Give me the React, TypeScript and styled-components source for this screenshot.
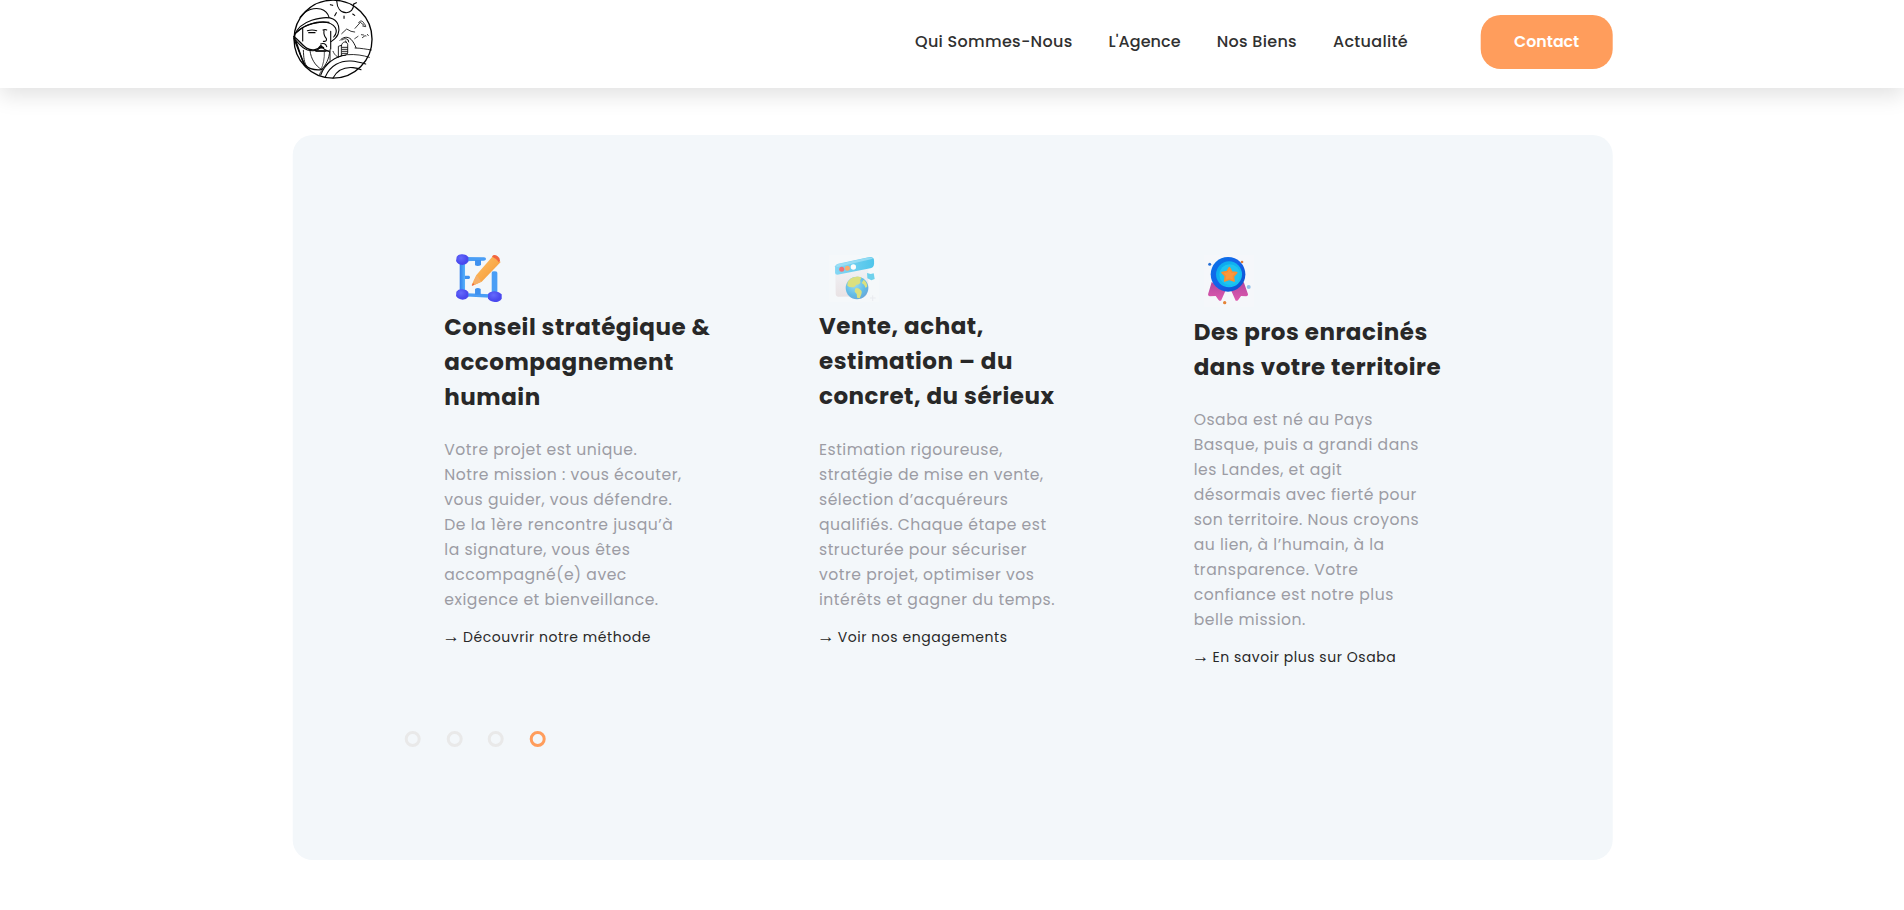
import React from 'react';
import styled, { createGlobalStyle } from 'styled-components';

const GlobalStyle = createGlobalStyle`
  *, *::before, *::after { box-sizing: border-box; }
  body {
    margin: 0;
    background: #fff;
    color: #282828;
    font-family: Poppins, Inter, sans-serif;
  }
`;

const Page = styled.div`
  min-height: 910px;
  overflow: hidden;
`;

const Header = styled.header`
  position: relative;
  height: 88px;
  background: #fff;
  box-shadow: 0 8px 20px rgba(0, 0, 0, 0.115);
`;

const Container = styled.div`
  width: 1320px;
  margin: 0 auto;
  translate: 0.7px;
`;

const HeaderRow = styled(Container)`
  display: flex;
  align-items: flex-start;
  justify-content: space-between;
`;

const LogoSvg = styled.svg`
  width: 80px;
  height: 80px;
  overflow: visible;
`;

const Nav = styled.nav`
  display: flex;
  align-items: center;
  gap: 36px;
  padding-top: 15px;
`;

const NavLink = styled.a<{ $tight?: boolean }>`
  font-size: 16px;
  font-weight: 500;
  line-height: 24px;
  letter-spacing: ${(p) => (p.$tight ? 0.08 : 0.3)}px;
  white-space: nowrap;
  color: #303030;
  text-decoration: none;
`;

const ContactButton = styled.a`
  width: 132px;
  height: 54px;
  margin-left: 36.8px;
  border-radius: 20px;
  background: #ff9d5c;
  color: #fff;
  font-size: 15.8px;
  font-weight: 600;
  line-height: 53px;
  text-align: center;
`;

const Card = styled.section`
  height: 725px;
  margin-top: 47px;
  padding: 115px 0 0 112px;
  border-radius: 20px;
  background: #f3f7fa;
`;

const Features = styled.div`
  display: grid;
  grid-template-columns: repeat(3, 374.7px);
  height: 481px;
  padding-left: 39.6px;
`;

const Feature = styled.article`
  display: flex;
  flex-direction: column;
  align-items: flex-start;
`;

const FeatureIcon = styled.svg`
  display: block;
  width: 76px;
`;

const Title = styled.h3<{ $gap: number }>`
  margin: 0 0 ${(p) => p.$gap}px;
  font-size: 23px;
  font-weight: 700;
  line-height: 35px;
  letter-spacing: 0.52px;
  color: #282828;
`;

const Description = styled.p`
  margin: 0 0 13px;
  font-size: 15.6px;
  line-height: 25px;
  letter-spacing: 0.52px;
  color: #9c9ca4;
`;

const Line = styled.span`
  display: block;
  white-space: nowrap;
`;

const MoreLink = styled.a`
  display: flex;
  align-items: baseline;
  height: 25px;
  font-size: 14px;
  line-height: 25px;
  letter-spacing: 0.54px;
  color: #282828;
`;

const Arrow = styled.span`
  width: 18.8px;
  font-family: 'Liberation Sans', sans-serif;
  font-size: 17.5px;
  line-height: 20px;
  letter-spacing: 0;
  text-indent: -2px;
`;

const Dots = styled.div`
  display: flex;
  gap: 25.67px;
`;

const Dot = styled.span<{ $active?: boolean }>`
  width: 16px;
  height: 16px;
  border: 3px solid ${(p) => (p.$active ? '#ff9d5c' : '#e9e9e9')};
  border-radius: 50%;
`;

function Logo() {
  return (
    <LogoSvg viewBox="39 0 240 240" fill="none" stroke="#050505" strokeWidth="3.3" strokeLinecap="round" strokeLinejoin="round">
      <circle cx="160" cy="117.5" r="117" strokeWidth="4" />
      {/* sun */}
      <path d="M171 2c1 22 12 35 27 36s24-11 24-25" />
      <path d="M170 38l-5 9M193 48v7M219 42l6 4M152 14l7 2M222 12l8-4" />
      {/* helmet */}
      <path d="M61 52c18-24 44-30 62-25 13 4 22 14 25 25" />
      <path d="M44 107c8-24 28-38 52-46 22-7 48-12 64-4 18 9 21 32 15 46-5 12-15 18-21 22" />
      <path d="M46 102c22-24 50-33 73-35 25-2 41 4 48 16 5 9 2 20-5 28" />
      <path d="M48 98c22-20 58-37 100-31" />
      <path d="M42 110c16 10 26 27 40 35 16 9 34 4 42-9" strokeWidth="4" />
      <path d="M42 114c14 15 23 30 41 36 20 5 36-1 43-12 3 7 12 13 21 16" />
      <path d="M48 122c10 24 16 55 28 73 12 12 31 16 49 14" strokeWidth="4" />
      <path d="M44 119l30 76M45 104v24" strokeWidth="3.8" />
      {/* face */}
      <path d="M69 85v38M83 92c10-3 18-3 28 0M87 98h19M130 90c4-2 8-2 11 0M133 91c-2 12 1 18 7 25 2 6-2 9-9 8" />
      <path d="M153 94v53M123 132c8-4 16 0 18 8" />
      <path d="M120 143h11" strokeWidth="5" />
      {/* beard */}
      <path d="M71 151c1 22 2 36 9 46M91 153c3 23 15 44 34 55M108 153h40M150 153c-1 23-12 43-24 55M151 149v33l-24 27" strokeWidth="2.6" />
      <path d="M134 155c1 21-4 39-9 51" strokeWidth="2" />
      <path d="M109 153h29" strokeWidth="4" />
      {/* mountains */}
      <path d="M186 101l15-14 13 7 11 2M226 85l16-18 11 9M237 68c4-8 12-6 15 1 3 5 6 5 6 11l-9-2M248 113l8-6 3 1" strokeWidth="2.4" />
      <path d="M225 116l10-7M245 104l7 1M263 103l3 4" strokeWidth="2.2" />
      {/* gloved hand */}
      <path d="M176 169v-30l9-3v31zM185 137c2-13 16-15 19-4v26c-3 8-13 9-19 6M187 142h16M187 148h16M187 154h16M187 160h15" strokeWidth="2.6" />
      <path d="M181 121c8-10 23-13 33-3 6 6 12 17 15 25M187 120c7-6 15-5 19 1M198 123l2 5M205 120l2 6" strokeWidth="2.8" />
      {/* planet rings */}
      <path d="M226 144c17 0 35 4 49 6M203 164c25-2 47 2 66 8" strokeWidth="2.5" />
      <path d="M123 225c13-34 44-57 76-60" />
      <path d="M137 230c15-34 46-49 77-47 17 1 34 6 44 9" />
      <path d="M160 234c13-24 37-33 60-31 12 1 20 4 24 6" />
      <path d="M129 209c-7 5-8 12-11 18M160 154c5 12 12 16 17 18" strokeWidth="2.4" />
    </LogoSvg>
  );
}

function BlueprintIcon() {
  return (
    <FeatureIcon viewBox="14 30 228 180" height="60">
      <defs>
        <linearGradient id="bar" x1="0" x2="1"><stop stopColor="#2f7fec" /><stop offset="1" stopColor="#58b3fb" /></linearGradient>
        <linearGradient id="pencil" x1="0" y1="0" x2="1" y2="1"><stop stopColor="#ffc467" /><stop offset=".55" stopColor="#f9a949" /><stop offset="1" stopColor="#e58a32" /></linearGradient>
        <radialGradient id="knob" cx=".4" cy=".35"><stop stopColor="#6469fb" /><stop offset="1" stopColor="#4a49ee" /></radialGradient>
      </defs>
      <path d="M59 62h16v98H59z" fill="url(#bar)" />
      <path d="M66 51l66 1q6 1 6 5t-6 5l-65 2zM155 98q0-4 8-4t9 4v64h-17zM66 159l84 4v10l-84-4z" fill="#4a9ef5" />
      <path d="M105 60h18v15q-9 6-18 1zM75 107h12q6 5 0 10H75zM105 147q8-6 17 0v17h-17z" fill="#3e91ef" />
      <path d="M50 50q5-8 17-7 13 1 18 8v14q-5 8-17 10-14 0-20-12z" fill="url(#knob)" />
      <path d="M49 155q6-8 18-7 13 1 18 8v14q-5 8-17 9-14-1-20-11z" fill="url(#knob)" />
      <path d="M144 162q6-8 20-8 14 1 21 9v13q-6 10-21 10-16-1-20-11z" fill="url(#knob)" />
      <path d="M158 49l24 17-57 59-28 12-1-4 13-28z" fill="url(#pencil)" />
      <path d="M101 122l9-17 14 20-21 10z" fill="#f6b069" />
      <path d="M156 50l3-4q6-3 13 2 9 6 8 14l-4 5q-5-10-20-17z" fill="#f2663f" />
      <path d="M99 129l4 5-8 4z" fill="#ed6445" />
    </FeatureIcon>
  );
}

function BrowserGlobeIcon() {
  return (
    <FeatureIcon viewBox="12 30 228 177" height="59">
      <defs>
        <linearGradient id="topbar" x1="0" x2="1"><stop stopColor="#86d7f4" /><stop offset="1" stopColor="#4fc5ea" /></linearGradient>
        <linearGradient id="window" x1="0" x2="0" y1="0" y2="1"><stop stopColor="#f1f2f6" /><stop offset="1" stopColor="#e9e2e4" /></linearGradient>
        <radialGradient id="globe" cx=".4" cy=".35" r=".7"><stop stopColor="#9bdcf2" /><stop offset=".65" stopColor="#62bce6" /><stop offset="1" stopColor="#6ba6d8" /></radialGradient>
      </defs>
      <path d="M43 45h149v141H43z" fill="#f5f8fa" />
      <path d="M62 101l99-17v45l-8 40-82 1q-8-1-8-9z" fill="url(#window)" />
      <path d="M61 79q2-6 9-8l95-20q13-1 13 11v10q-1 11-11 13L68 104q-7 0-7-6z" fill="url(#topbar)" />
      <path d="M64 77q3-4 8-5l92-20q7 0 11 4L66 82z" fill="#a1e0f5" opacity=".8" />
      <circle cx="81" cy="88" r="7.5" fill="#f26f76" />
      <circle cx="98" cy="85" r="7.5" fill="#f8ac70" />
      <circle cx="116" cy="81" r="8" fill="#fdfcfb" />
      <path d="M157 99l11 3 9-2 3 17-10 4-12-6z" fill="#6fd1ec" />
      <circle cx="127" cy="144" r="34" fill="url(#globe)" />
      <path d="M99 126q8-15 27-16 13-1 14 5-6 5-3 13-5 8-13 6-1 7-12 8-9 0-14-5zM147 119q9 6 11 20l-5 5-5-10-7-5zM121 146q8-5 17 4 5 3 2 13l-5 12-8-2-1-11-6-7z" fill="#dbe07f" />
      <path d="M174 166v17M166 174h17" stroke="#e9ebef" strokeWidth="3" />
    </FeatureIcon>
  );
}

function AwardIcon() {
  return (
    <FeatureIcon viewBox="12 30 228 195" height="65">
      <defs>
        <linearGradient id="rim" x1="0" y1="0" x2="1" y2="1"><stop stopColor="#0876e7" /><stop offset=".5" stopColor="#1562ea" /><stop offset="1" stopColor="#0b50c9" /></linearGradient>
        <linearGradient id="disc" x1="0" y1="0" x2="1" y2="1"><stop stopColor="#0aa5ed" /><stop offset="1" stopColor="#17c8f2" /></linearGradient>
        <linearGradient id="ribbon" x1="0" y1="0" x2="0" y2="1"><stop stopColor="#b3479f" /><stop offset="1" stopColor="#df59ae" /></linearGradient>
      </defs>
      <path d="M42 45h150v156H42z" fill="#f5f7fa" />
      <path d="M66 126l42 25-14 31q-4 2-8-3l-8-11-18 1q-6-1-5-6zM162 126l-38 25 14 31q4 2 8-3l8-11 16 1q6-1 5-6z" fill="url(#ribbon)" />
      <circle cx="115" cy="103" r="52" fill="url(#rim)" />
      <circle cx="118" cy="103" r="39" fill="url(#disc)" />
      <circle cx="120" cy="104" r="31" fill="#20c3ef" />
      <path d="M119 83l7 13 15 2-10 11 2 14-14-5-14 5 2-15-10-10 15-3z" fill="#fb983c" stroke="#f98f31" strokeWidth="5" strokeLinejoin="round" />
      <circle cx="60" cy="73" r="4.5" fill="#2771d6" />
      <circle cx="157" cy="66" r="4" fill="#e17d37" />
      <circle cx="177" cy="141" r="6" fill="#91bfe7" />
      <circle cx="105" cy="188" r="5" fill="#e58337" />
    </FeatureIcon>
  );
}

type FeatureData = {
  icon: () => React.JSX.Element;
  titleGap: number;
  title: string[];
  description: string[];
  link: string;
};

const features: FeatureData[] = [
  {
    icon: BlueprintIcon,
    titleGap: 22,
    title: ['Conseil stratégique &', 'accompagnement', 'humain'],
    description: [
      'Votre projet est unique.',
      'Notre mission : vous écouter,',
      'vous guider, vous défendre.',
      'De la 1ère rencontre jusqu’à',
      'la signature, vous êtes',
      'accompagné(e) avec',
      'exigence et bienveillance.',
    ],
    link: 'Découvrir notre méthode',
  },
  {
    icon: BrowserGlobeIcon,
    titleGap: 23,
    title: ['Vente, achat,', 'estimation – du', 'concret, du sérieux'],
    description: [
      'Estimation rigoureuse,',
      'stratégie de mise en vente,',
      'sélection d’acquéreurs',
      'qualifiés. Chaque étape est',
      'structurée pour sécuriser',
      'votre projet, optimiser vos',
      'intérêts et gagner du temps.',
    ],
    link: 'Voir nos engagements',
  },
  {
    icon: AwardIcon,
    titleGap: 22,
    title: ['Des pros enracinés', 'dans votre territoire'],
    description: [
      'Osaba est né au Pays',
      'Basque, puis a grandi dans',
      'les Landes, et agit',
      'désormais avec fierté pour',
      'son territoire. Nous croyons',
      'au lien, à l’humain, à la',
      'transparence. Votre',
      'confiance est notre plus',
      'belle mission.',
    ],
    link: 'En savoir plus sur Osaba',
  },
];

const Lines = ({ lines }: { lines: string[] }) => (
  <>
    {lines.map((text) => (
      <Line key={text}>{text}</Line>
    ))}
  </>
);

export default function App() {
  return (
    <Page>
      <GlobalStyle />
      <Header>
        <HeaderRow>
          <Logo />
          <Nav>
            <NavLink>Qui Sommes-Nous</NavLink>
            <NavLink $tight>L'Agence</NavLink>
            <NavLink>Nos Biens</NavLink>
            <NavLink>Actualité</NavLink>
            <ContactButton>Contact</ContactButton>
          </Nav>
        </HeaderRow>
      </Header>
      <Container as="main">
        <Card>
          <Features>
            {features.map(({ icon: Icon, titleGap, title, description, link }) => (
              <Feature key={link}>
                <Icon />
                <Title $gap={titleGap}><Lines lines={title} /></Title>
                <Description><Lines lines={description} /></Description>
                <MoreLink>
                  <Arrow>→</Arrow>
                  <Line>{link}</Line>
                </MoreLink>
              </Feature>
            ))}
          </Features>
          <Dots>
            <Dot />
            <Dot />
            <Dot />
            <Dot $active />
          </Dots>
        </Card>
      </Container>
    </Page>
  );
}
